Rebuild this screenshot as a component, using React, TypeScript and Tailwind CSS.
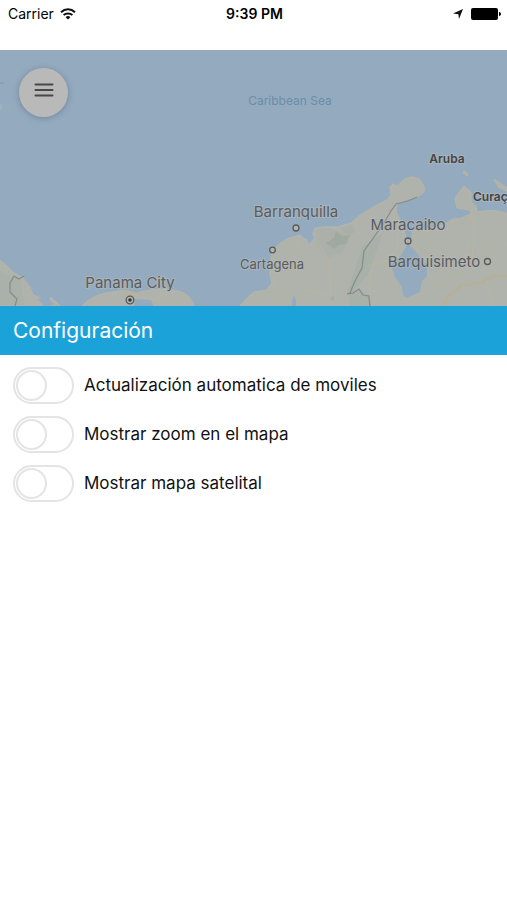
import React, { useState } from 'react';

const options = [
  { id: 'autoUpdate', label: 'Actualización automatica de moviles' },
  { id: 'showZoom', label: 'Mostrar zoom en el mapa' },
  { id: 'satellite', label: 'Mostrar mapa satelital' },
];

const StatusBar = () => (
  <header className="grid grid-cols-3 items-center h-[27px] pl-2 pr-1.5 text-[14px] text-black">
    <div className="flex items-center gap-1.5">
      <span>Carrier</span>
      <svg width="16" height="12" viewBox="0 0 16 12" fill="none" stroke="#111" strokeWidth="2" aria-hidden="true">
        <path d="M1 4.2C5 .4 11 .4 15 4.2" />
        <path d="M3.6 7.1c2.500-2.300 6.300-2.300 8.800 0" />
        <path d="M8 11.6 5.6 9.2a3.4 3.4 0 0 1 4.800 0z" fill="#111" stroke="none" />
      </svg>
    </div>
    <span className="text-center font-semibold">9:39 PM</span>
    <div className="flex items-center justify-end gap-2">
      <svg width="10" height="10" viewBox="0 0 10 10" aria-hidden="true">
        <path d="M10 0 6 10 5.4 5.2 0 4.6z" fill="#111" />
      </svg>
      <svg width="30" height="12" viewBox="0 0 30 12" aria-hidden="true">
        <rect x="0" y="0" width="27" height="12" rx="2" fill="#000" />
        <path d="M28 4c1.400.4 2 1 2 2s-.6 1.600-2 2z" fill="#000" />
      </svg>
    </div>
  </header>
);

const CoastMap = () => (
  <svg className="block w-full h-64" viewBox="0 0 507 256" preserveAspectRatio="xMidYMid slice" role="img" aria-label="Mapa">
    <rect width="507" height="256" fill="#94abbf" />

    {/* land */}
    <g fill="#b0b2ac" stroke="#b5b6a8" strokeWidth="1" strokeLinejoin="round">
      <path d="M-2 209Q6 214 13 222L23 228 30 237 33 245 41 248 49 251 51 247 58 254 62 258H-2z" />
      <path d="M80 258Q90 246 106 243L124 240 136 243 150 240 165 239Q184 240 190 248L195 258z" />
      <path d="M238 258 247 248 254 242 266 240 272 233 270 226 270 215 272 201 279 194 289 188 300 185 306 190 312 186 315 178 325 177 338 177 351 173 360 165 373 157 387 150 391 145 390 137 393 134 397 136 405 129Q412 125 419 129 426 136 424 142 418 148 407 149L397 154 396 162 402 173 405 184 407 191 412 187 412 181 428 179 445 174 453 169 465 168 472 163 469 160 457 158 455 148 464 136 471 142 471 152 476 156 477 162Q494 158 509 164V258z" />
      <path d="M464 121 468 124 467 126 463 123zM494 129 500 133 509 139V142L498 137z" />
    </g>

    {/* forest */}
    <g fill="#a8b1a8">
      <path d="M0 221c4 2 12 5 20 10l5 24H0z" opacity=".7" />
      <path d="M362 197c9-5 14-11 20-13l-6 18-8 22-16 18-5 1zM349 240l10 0 10 7 3 11h-22z" />
      <path d="M316 178l14 0 15 6 4 7-8 12-12 5-9-7-4-12z" opacity=".6" />
      <path d="M336 181l6 5 8-1-4 9-7 1-5 4-8-6 8-5z" fill="#a0a9a0" />
      <path d="M340 178l12-4 3 8-8 4z" />
    </g>

    {/* inland water */}
    <g fill="#94abbf">
      <path d="M408 194 415 201 421 208 427 215 427 226 422 231 420 242 406 248 403 245 402 237 395 227 391 214 400 207z" />
      <path d="M306 183l5-2 3 7-5 6-2-5zM329 248l5-3-1 6zM292 258v-6l2-7 2 6v7zM38 249l8-2 8 7-8 4zM135 249l16 1 3 7h-20z" />
    </g>

    {/* roads */}
    <g fill="none" stroke="#bab69f" strokeWidth="1" strokeOpacity=".75">
      <path d="M299 189c-2 14-9 21-7 32l10 18 27 6 6 12M272 207l2 31 17 20" />
      <path d="M318 191l10 19 4 38M118 242l14 2 22 6 18-10" />
      <path d="M393 160l5 20-1 18-8 12-22 6M413 191l7 13M418 185l26-9 28-13 2 18-2 30M509 195l-17-6-16 13" />
      <path d="M372 216l-3 30M430 241l22-12 10-10 8-33M487 229l7 29" />
    </g>
    <path d="M509 226l-17 0-11 7-19 2-14 12-6 10" fill="none" stroke="#bfae82" strokeWidth="1.500" strokeOpacity=".8" />
    <path d="M124 242l8 2 2 5" fill="none" stroke="#c0b183" />

    {/* borders */}
    <g fill="none" stroke="#858b88" strokeWidth="1.200">
      <path d="M417 147l-9 4-12 3-5 7-7 12-10 14-10 14-2 17-7 13-5 12-3 1 6-1 6-4 4 6 6 1 1 12M24 226l-5 3-5-3-4 7 0 9 7 7-2 7" />
    </g>
    <path d="M0 33h4" stroke="#8197a9" />
    <circle cx="-3" cy="57" r="5" fill="#a3b1bc" />

    {/* cities */}
    <g fill="#b4b5b0" stroke="#5a5a5a" strokeWidth="1.300">
      <circle cx="296" cy="178" r="3" />
      <circle cx="272.500" cy="200" r="2.800" />
      <circle cx="408" cy="191" r="3" />
      <circle cx="487.500" cy="211.500" r="3" />
      <circle cx="130" cy="250" r="3.800" />
    </g>
    <circle cx="130" cy="250" r="1.800" fill="#333" />

    {/* labels */}
    <g fill="#5a5c5e" stroke="#b5babb" strokeWidth="2" strokeOpacity=".6" paintOrder="stroke" fontSize="15" textAnchor="middle">
      <text x="296" y="167">Barranquilla</text>
      <text x="408" y="180">Maracaibo</text>
      <text x="434" y="217">Barquisimeto</text>
      <text x="130" y="238">Panama City</text>
      <text x="272" y="219" fontSize="13">Cartagena</text>
      <text x="447" y="113" fontSize="12" fontWeight="600" fill="#444">Aruba</text>
      <text x="473" y="151" fontSize="12" fontWeight="600" fill="#444" textAnchor="start">Curaçao</text>
    </g>
    <text x="290" y="55" fontSize="12" textAnchor="middle" fill="#6c8ca9">Caribbean Sea</text>
  </svg>
);

const SwitchRow = ({ id, label, checked, onChange }: { id: string, label: string, checked: boolean, onChange: () => void }) => (
  <div className="flex items-center gap-2.5">
    <input
      id={id}
      type="checkbox"
      role="switch"
      checked={checked}
      onChange={onChange}
      className="appearance-none shrink-0 flex items-start w-[61px] h-[37px] p-px rounded-full border-2 border-[#e4e4e4] bg-white cursor-pointer checked:justify-end checked:bg-[#1ba2d9] before:content-[''] before:block before:w-[31px] before:h-[31px] before:rounded-full before:border-2 before:border-[#e4e4e4] before:bg-white"
    />
    <label htmlFor={id} className="pb-0.5 text-[17px] leading-6 text-[#111] cursor-pointer">{label}</label>
  </div>
);

export default function App() {
  const [settings, setSettings] = useState<Record<string, boolean>>({});

  const toggle = (id: string) => setSettings((prev) => ({ ...prev, [id]: !prev[id] }));

  return (
    <div className="min-h-screen bg-white font-[Inter,'Liberation_Sans',sans-serif]">
      <StatusBar />
      <main className="mt-[23px]">
        <div className="relative overflow-hidden">
          <CoastMap />
          <button type="button" aria-label="Menú" className="absolute left-[19px] top-[18px] flex justify-center w-[49px] h-[49px] pt-[15px] rounded-full bg-[#b9b9b9] shadow-[0_1px_6px_rgba(60,75,90,0.4)]">
            <svg width="20" height="15" viewBox="0 0 20 15" stroke="#484848" strokeWidth="2" strokeLinecap="round" aria-hidden="true">
              <path d="M1.500 1.500h17M1.500 7h17M1.500 12.500h17" />
            </svg>
          </button>
        </div>
        <section>
          <h1 className="px-[13px] py-2 text-[21px] leading-[33px] text-white bg-[#1ba2d9]">Configuración</h1>
          <div className="flex flex-col gap-3 px-[13px] py-3">
            {options.map((option) => (
              <SwitchRow key={option.id} id={option.id} label={option.label} checked={!!settings[option.id]} onChange={() => toggle(option.id)} />
            ))}
          </div>
        </section>
      </main>
    </div>
  );
}
